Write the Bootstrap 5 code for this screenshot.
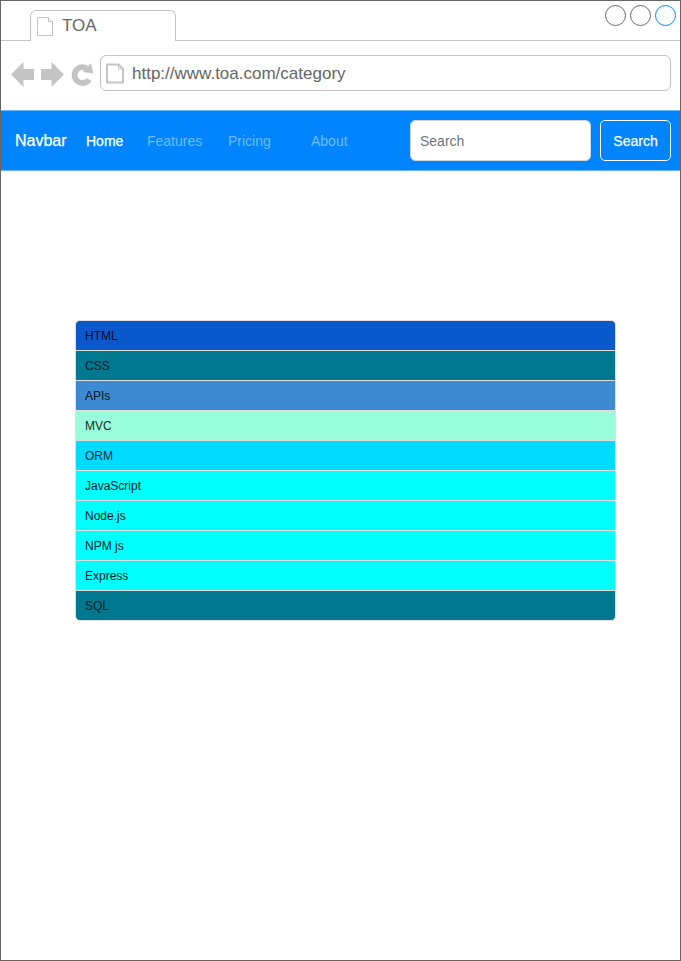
<!DOCTYPE html>
<html lang="en">
<head>
<meta charset="utf-8">
<meta name="viewport" content="width=device-width, initial-scale=1">
<title>TOA</title>
<link href="https://cdn.jsdelivr.net/npm/bootstrap@5.3.0/dist/css/bootstrap.min.css" rel="stylesheet">
<style>
body { font-family: "Liberation Sans", Arial, sans-serif; background: #fff; }
.browser { width: 681px; height: 961px; border: 1px solid #666; overflow: hidden; }
.tab-strip { height: 40px; border-bottom: 1px solid #c4c4c4; padding-left: 29px; }
.page-tab { width: 146px; height: 31px; margin-bottom: -1px; padding-left: 6px; border: 1px solid #c4c4c4; border-bottom: 0; border-radius: 6px 6px 0 0; background: #fff; color: #666; font-size: 17px; line-height: 30px; }
.page-tab span { margin-left: 8px; }
.window-dots { padding: 3px 4px 0 0; gap: 3px; }
.toolbar { height: 69px; padding: 14px 9px 0 10px; }
.address { width: 571px; height: 36px; border: 1px solid #c4c4c4; border-radius: 6px; padding-left: 5px; color: #666; font-size: 17px; line-height: 34px; }
.address span { margin-left: 7px; padding-top: 2px; }
.toa-nav { --bs-navbar-nav-link-padding-x: 0; height: 61px; background: #0085ff; border-top: 1px solid #66b5fd; border-bottom: 1px solid #66b5fd; padding: 9px 9px 9px 14px; font-size: 14px; }
.toa-nav .navbar-brand { font-size: 16px; color: #fff; width: 71px; margin: 0; padding: 0; line-height: 24px; -webkit-text-stroke: .25px #fff; }
.toa-nav .nav-link { padding: 1px 0 0; line-height: 24px; color: #70bbff; }
.toa-nav .nav-link.active { color: #fff; -webkit-text-stroke: .25px #fff; }
.w-home { width: 61px; } .w-features { width: 81px; } .w-pricing { width: 83px; }
.toa-nav form { gap: 9px; }
.toa-nav .form-control { width: 181px; height: 41px; padding: 0 9px 0; font-size: 14px; border: 1px solid #ced4da; border-radius: 5px; }
.toa-nav .form-control::placeholder { color: #6c757d; }
.toa-nav .btn { width: 71px; height: 41px; padding: 2px 0 0; font-size: 14px; border-radius: 5px; -webkit-text-stroke: .25px #fff; }
.categories { width: 541px; margin: 149px 0 0 74px; border-radius: 5px; }
.categories .list-group-item { height: 30px; padding: 0 9px; line-height: 30px; font-size: 12px; border: 1px solid #dfdfdf; border-bottom: 0; }
.categories .list-group-item + .list-group-item { border-top-width: 1px; }
.categories .list-group-item:first-child { border-radius: 5px 5px 0 0; }
.categories .list-group-item:last-child { height: 31px; border-bottom: 1px solid #dfdfdf; border-radius: 0 0 5px 5px; }
.categories .bg-html { background: #0a59cc; color: #00081a; }
.categories .bg-teal { background: #00788f; color: #001a20; }
.categories .bg-api { background: #3d8ad0; color: #0a1724; }
.categories .bg-mvc { background: #99fcdb; color: #1c2d28; }
.categories .bg-orm { background: #00dbff; color: #002b33; }
.categories .bg-js { background: #00ffff; color: #002020; }
</style>
</head>
<body>
<div class="browser d-flex flex-column">
  <header class="tab-strip d-flex align-items-end justify-content-between flex-shrink-0">
    <div class="page-tab d-flex align-items-center">
      <svg width="17" height="20" viewBox="0 0 17 20" fill="none" stroke="#c4c4c4"><path d="M.5 1.5H11L15.5 6V19.5H.5ZM11.5 1.5V5.5H15.5"/></svg>
      <span>TOA</span>
    </div>
    <div class="window-dots d-flex align-self-start">
      <svg width="22" height="22" fill="none" stroke="#666"><circle cx="11.5" cy="11.5" r="10"/></svg>
      <svg width="22" height="22" fill="none" stroke="#666"><circle cx="11.5" cy="11.5" r="10"/></svg>
      <svg width="22" height="22" fill="none" stroke="#0085ff"><circle cx="11.5" cy="11.5" r="10"/></svg>
    </div>
  </header>
  <div class="toolbar d-flex justify-content-between flex-shrink-0">
    <svg width="84" height="36" viewBox="11 55 84 36" fill="#c4c4c4">
      <path d="M11 74.5L23.5 62V69H34V80H23.5V87Z"/>
      <path d="M64 74.5L51.5 62V69H41V80H51.5V87Z"/>
      <path d="M87.8 69A8 8 0 1 0 89.2 79.6" fill="none" stroke="#c4c4c4" stroke-width="5.8"/>
      <path d="M91 63.2L93.5 73.6L82.6 72Z"/>
    </svg>
    <div class="address d-flex align-items-center">
      <svg width="19" height="21" viewBox="0 0 19 21" fill="none" stroke="#c4c4c4"><path d="M1 1.5H12.5L17 6V19.5H1Z" stroke-width="2"/><path d="M12.5 1.5V6H17"/></svg>
      <span>http://www.toa.com/category</span>
    </div>
  </div>
  <nav class="toa-nav navbar navbar-expand flex-shrink-0">
    <a class="navbar-brand" href="#">Navbar</a>
    <div class="navbar-nav">
      <a class="nav-link active w-home" href="#">Home</a>
      <a class="nav-link w-features" href="#">Features</a>
      <a class="nav-link w-pricing" href="#">Pricing</a>
      <a class="nav-link" href="#">About</a>
    </div>
    <form class="d-flex ms-auto">
      <input class="form-control" type="search" placeholder="Search" aria-label="Search">
      <button class="btn btn-outline-light" type="button">Search</button>
    </form>
  </nav>
  <ul class="categories list-group">
    <li class="list-group-item bg-html">HTML</li>
    <li class="list-group-item bg-teal">CSS</li>
    <li class="list-group-item bg-api">APIs</li>
    <li class="list-group-item bg-mvc">MVC</li>
    <li class="list-group-item bg-orm">ORM</li>
    <li class="list-group-item bg-js">JavaScript</li>
    <li class="list-group-item bg-js">Node.js</li>
    <li class="list-group-item bg-js">NPM js</li>
    <li class="list-group-item bg-js">Express</li>
    <li class="list-group-item bg-teal">SQL</li>
  </ul>
</div>
<script src="https://cdn.jsdelivr.net/npm/bootstrap@5.3.0/dist/js/bootstrap.bundle.min.js"></script>
</body>
</html>
